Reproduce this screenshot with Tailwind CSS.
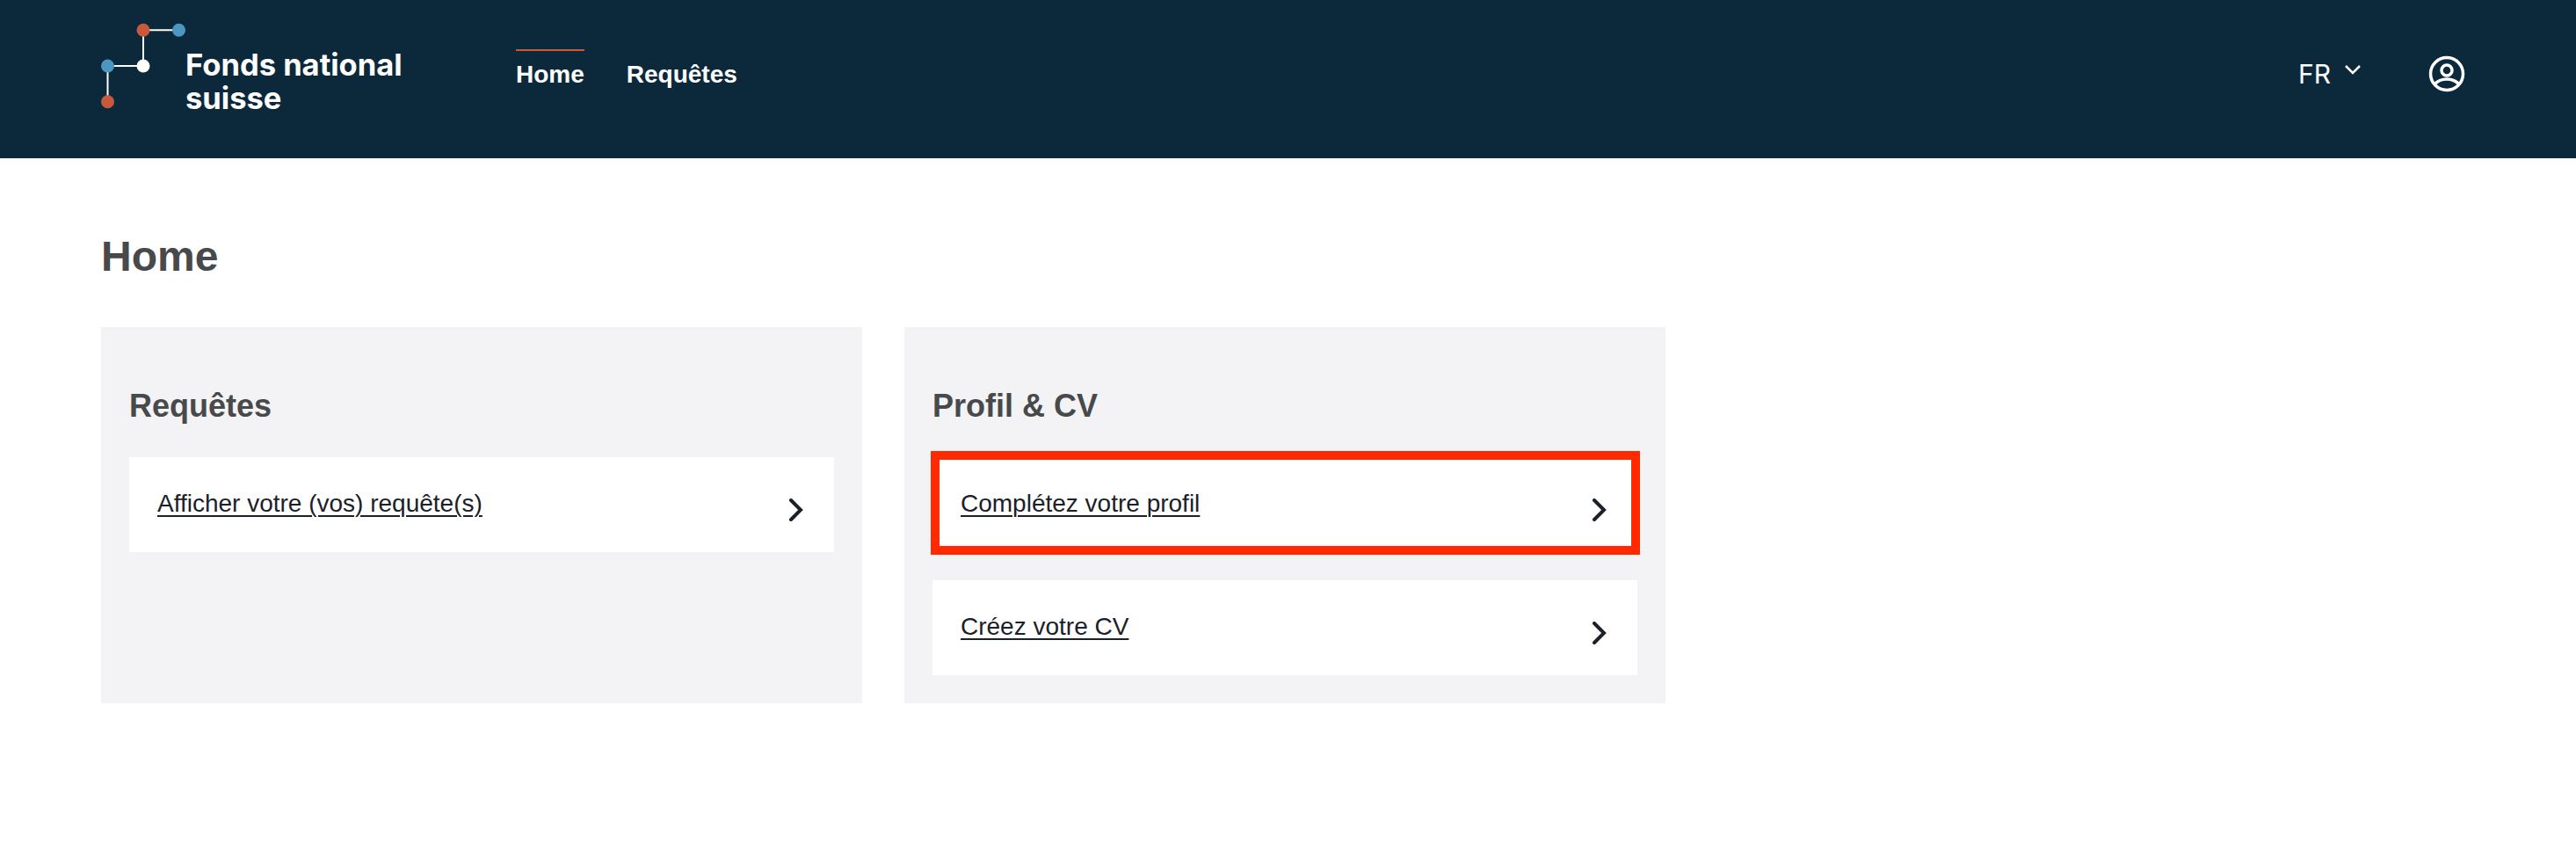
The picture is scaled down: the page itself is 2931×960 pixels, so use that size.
<!doctype html>
<html lang="fr">
<head>
<meta charset="utf-8">
<title>Fonds national suisse</title>
<script src="https://cdn.jsdelivr.net/npm/@tailwindcss/browser@4"></script>
</head>
<body class="bg-white font-['Liberation_Sans',Arial,sans-serif]">
<header class="h-[180px] bg-[#0c293c] pl-[115px] pr-[126px] pb-[12px] flex items-center text-white">
  <div class="flex items-center w-[472px] h-full">
    <svg class="w-[97px] h-[120px] shrink-0 mt-[-10px]" viewBox="0 0 97 120" fill="none">
      <path d="M7.5 96.700 V56 H48 V15.300 H88.500" stroke="#fff" stroke-width="2"/>
      <circle cx="48" cy="15.300" r="7.500" fill="#c8593c"/>
      <circle cx="88.500" cy="15.300" r="7.500" fill="#4c97c1"/>
      <circle cx="48" cy="56" r="7.500" fill="#fff"/>
      <circle cx="7.500" cy="56" r="7.500" fill="#4c97c1"/>
      <circle cx="7.500" cy="96.700" r="7.500" fill="#c8593c"/>
    </svg>
    <div class="font-['Inter',sans-serif] font-bold text-[34.5px] leading-[38px] text-white mt-[17px] ml-[-1px]">Fonds national<br>suisse</div>
  </div>
  <nav class="flex gap-[48px] text-[28px] font-bold leading-[32px]">
    <a class="relative block pt-[1px]" href="#"><span class="absolute left-0 right-0 top-[-12px] h-[2px] bg-[#c8593c]"></span>Home</a>
    <a class="block pt-[1px]" href="#">Requêtes</a>
  </nav>
  <div class="ml-auto flex items-center">
    <div class="flex items-start font-['Inter',sans-serif] text-[30px] leading-[36px]">
      <span>FR</span>
      <svg class="w-[20px] h-[12px] ml-[15px] mt-[7px]" viewBox="0 0 20 12" fill="none"><path d="M2 2 L10 10 L18 2" stroke="#fff" stroke-width="2.500"/></svg>
    </div>
    <svg class="w-[42px] h-[42px] ml-[76px]" viewBox="0 0 42 42" fill="none" stroke="#fff" stroke-width="3.500">
      <circle cx="21" cy="21" r="18.500"/>
      <circle cx="21" cy="17" r="6"/>
      <path d="M7 33 C11 28.500 16 27 21 27 C26 27 31 28.500 35 33"/>
    </svg>
  </div>
</header>
<main class="pl-[115px] text-[#48494b]">
  <h1 class="pt-[84px] text-[48px] font-bold leading-[56px]">Home</h1>
  <div class="mt-[52px] flex items-stretch gap-[48px]">
    <section class="w-[866px] h-[428px] bg-[#f3f3f5] p-[32px]">
      <h2 class="pt-[37px] text-[36px] font-bold leading-[42px]">Requêtes</h2>
      <div class="mt-[37px] flex flex-col gap-[32px]">
        <a href="#" class="relative h-[108px] bg-white pl-[32px] pr-[35px] flex items-center justify-between text-[#1a2129]">
          <span class="text-[28px] underline decoration-2 underline-offset-[4px] leading-[32px] mt-[-2px]">Afficher votre (vos) requête(s)</span>
          <svg class="w-[16px] h-[26px] mt-[12px]" viewBox="0 0 16 26" fill="none"><path d="M2 2 L13 13 L2 24" stroke="#1a2129" stroke-width="4" stroke-linecap="round"/></svg>
        </a>
      </div>
    </section>
    <section class="w-[866px] h-[428px] bg-[#f3f3f5] p-[32px]">
      <h2 class="pt-[37px] text-[36px] font-bold leading-[42px]">Profil &amp; CV</h2>
      <div class="mt-[37px] flex flex-col gap-[32px]">
        <a href="#" class="relative h-[108px] bg-white pl-[32px] pr-[35px] flex items-center justify-between text-[#1a2129]">
          <span class="text-[28px] underline decoration-2 underline-offset-[4px] leading-[32px] mt-[-2px]">Complétez votre profil</span>
          <svg class="w-[16px] h-[26px] mt-[12px]" viewBox="0 0 16 26" fill="none"><path d="M2 2 L13 13 L2 24" stroke="#1a2129" stroke-width="4" stroke-linecap="round"/></svg>
          <span class="absolute left-[-2px] top-[-7px] w-[807px] h-[118px] border-[10px] border-[#ff2a00]"></span>
        </a>
        <a href="#" class="relative h-[108px] bg-white pl-[32px] pr-[35px] flex items-center justify-between text-[#1a2129]">
          <span class="text-[28px] underline decoration-2 underline-offset-[4px] leading-[32px] mt-[-2px]">Créez votre CV</span>
          <svg class="w-[16px] h-[26px] mt-[12px]" viewBox="0 0 16 26" fill="none"><path d="M2 2 L13 13 L2 24" stroke="#1a2129" stroke-width="4" stroke-linecap="round"/></svg>
        </a>
      </div>
    </section>
  </div>
</main>
</body>
</html>
